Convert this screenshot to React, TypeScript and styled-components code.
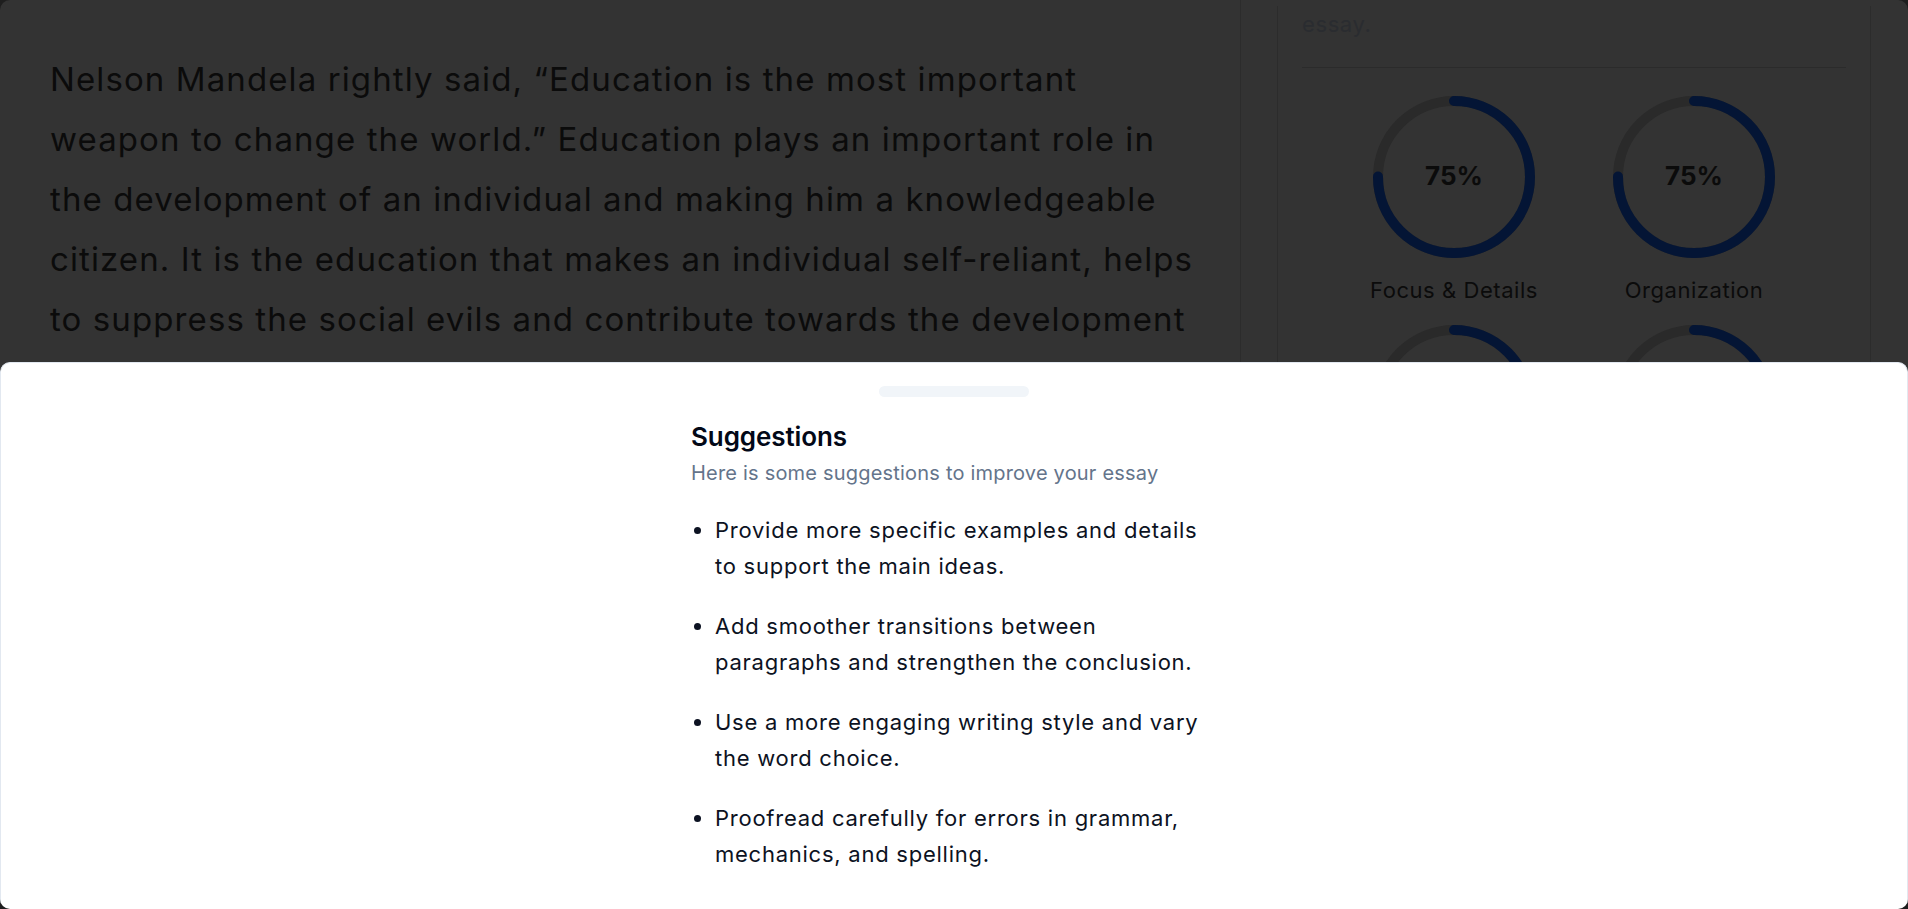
import React from "react";
import styled, { createGlobalStyle } from "styled-components";

const GlobalStyle = createGlobalStyle`
  html, body {
    margin: 0;
    padding: 0;
    height: 100%;
    overflow: hidden;
    background: #1e1e1e;
  }
  #root {
    height: 100%;
  }
  * { box-sizing: border-box; }
`;

const Frame = styled.div`
  position: relative;
  height: 100vh;
  border-radius: 10px;
  overflow: hidden;
  background: #333333;
  font-family: Inter, "Noto Sans", sans-serif;
`;

const Page = styled.div`
  display: flex;
  height: 100%;
`;

const Main = styled.main`
  flex: 0 0 1241px;
  padding: 49px 41px 0 50px;
  border-right: 1px solid #2c2c2c;
`;

const EssayText = styled.p`
  margin: 0;
  font-size: 33px;
  line-height: 60px;
  color: #0b0b0b;
  letter-spacing: 1.1px;
`;

const Aside = styled.aside`
  flex: 1;
  padding: 0 37px 0 36px;
`;

const Card = styled.section`
  border: 1px solid #2c2c2c;
  border-top: none;
  padding: 0 24px;
  height: 100%;
`;

const CardNote = styled.p`
  margin: 6px 0 0;
  font-size: 22px;
  line-height: 36px;
  color: #2a2c30;
  letter-spacing: 0.6px;
`;

const Divider = styled.hr`
  margin: 25px 0 0;
  border: none;
  border-top: 1px solid #2b2b2b;
`;

const MetricGrid = styled.div`
  display: grid;
  grid-template-columns: repeat(2, 240px);
  justify-content: center;
  row-gap: 17px;
  margin-top: 28px;
`;

const Metric = styled.div`
  display: flex;
  flex-direction: column;
  align-items: center;
`;

const Ring = styled.div`
  position: relative;
  width: 162px;
  height: 162px;
`;

const RingValue = styled.span`
  position: absolute;
  inset: 0;
  display: flex;
  align-items: center;
  justify-content: center;
  padding-bottom: 3px;
  font-size: 26px;
  font-weight: 700;
  color: #0b0b0b;
`;

const MetricLabel = styled.span`
  margin-top: 14px;
  font-size: 22px;
  line-height: 36px;
  color: #0b0b0b;
  letter-spacing: 0.55px;
`;

const Sheet = styled.div`
  position: absolute;
  top: 362px;
  left: 0;
  right: 0;
  bottom: 0;
  background: #ffffff;
  border: 1px solid #e2e8f0;
  border-bottom: none;
  border-radius: 10px 10px 0 0;
  display: flex;
  flex-direction: column;
`;

const Handle = styled.div`
  margin: 23px auto 0;
  width: 150px;
  height: 11px;
  border-radius: 999px;
  background: #f1f5f9;
`;

const SheetBody = styled.div`
  width: 526px;
  margin: 0 auto;
`;

const SheetTitle = styled.h2`
  margin: 23px 0 0;
  font-size: 26px;
  line-height: 34px;
  font-weight: 600;
  color: #020817;
  letter-spacing: -0.1px;
`;

const SheetDescription = styled.p`
  margin: 4px 0 0;
  font-size: 20px;
  line-height: 30px;
  color: #64748b;
  letter-spacing: 0.2px;
`;

const SuggestionList = styled.ul`
  margin: 24px 0 0;
  padding: 0 4px 0 24px;
  list-style: disc;
`;

const Suggestion = styled.li`
  font-size: 22px;
  line-height: 36px;
  color: #0c1222;
  letter-spacing: 0.75px;
  margin-bottom: 24px;
`;

const metrics = [
  { label: "Focus & Details", value: 75 },
  { label: "Organization", value: 75 },
  { label: "Voice", value: 75 },
  { label: "Word Choice", value: 75 },
];

const suggestions = [
  "Provide more specific examples and details to support the main ideas.",
  "Add smoother transitions between paragraphs and strengthen the conclusion.",
  "Use a more engaging writing style and vary the word choice.",
  "Proofread carefully for errors in grammar, mechanics, and spelling.",
];

function ProgressRing({ value }: { value: number }) {
  const size = 162;
  const stroke = 10;
  const r = (size - stroke) / 2;
  const c = 2 * Math.PI * r;
  return (
    <Ring>
      <svg width={size} height={size} viewBox={`0 0 ${size} ${size}`}>
        <circle cx={size / 2} cy={size / 2} r={r} fill="none" stroke="#2a2a2a" strokeWidth={stroke} />
        <circle
          cx={size / 2}
          cy={size / 2}
          r={r}
          fill="none"
          stroke="#041535"
          strokeWidth={stroke}
          strokeLinecap="round"
          strokeDasharray={`${(c * value) / 100} ${c}`}
          transform={`rotate(-90 ${size / 2} ${size / 2})`}
        />
      </svg>
      <RingValue>{value}%</RingValue>
    </Ring>
  );
}

export default function App() {
  return (
    <>
      <GlobalStyle />
      <Frame>
        <Page>
          <Main>
            <EssayText>
              Nelson Mandela rightly said, “Education is the most important weapon to change the world.”
              Education plays an important role in the development of an individual and making him a
              knowledgeable citizen. It is the education that makes an individual self-reliant, helps to
              suppress the social evils and contribute towards the development of the nation.
            </EssayText>
          </Main>
          <Aside>
            <Card>
              <CardNote>essay.</CardNote>
              <Divider />
              <MetricGrid>
                {metrics.map((m) => (
                  <Metric key={m.label}>
                    <ProgressRing value={m.value} />
                    <MetricLabel>{m.label}</MetricLabel>
                  </Metric>
                ))}
              </MetricGrid>
            </Card>
          </Aside>
        </Page>
        <Sheet>
          <Handle />
          <SheetBody>
            <SheetTitle>Suggestions</SheetTitle>
            <SheetDescription>Here is some suggestions to improve your essay</SheetDescription>
            <SuggestionList>
              {suggestions.map((s) => (
                <Suggestion key={s}>{s}</Suggestion>
              ))}
            </SuggestionList>
          </SheetBody>
        </Sheet>
      </Frame>
    </>
  );
}
